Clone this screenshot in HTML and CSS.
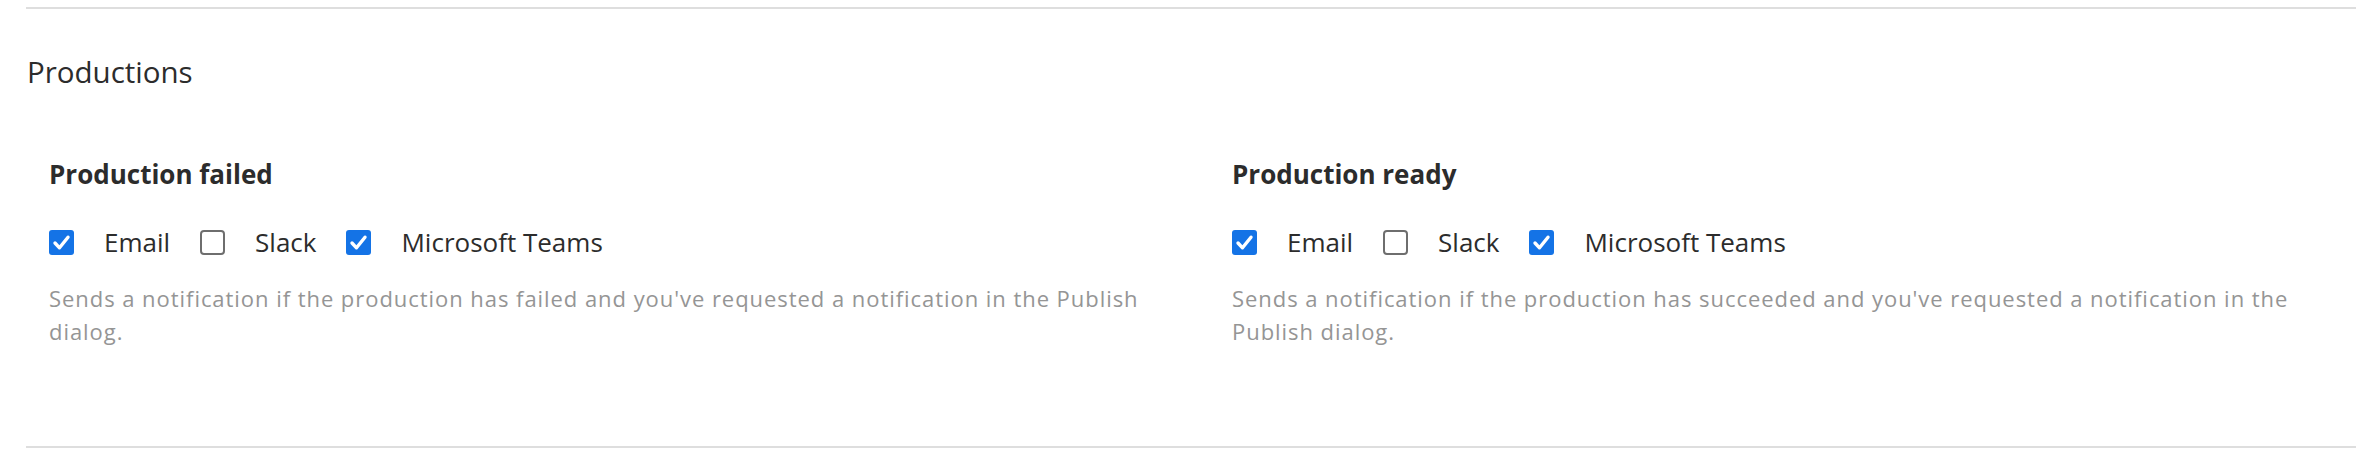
FILE: index.html
```html
<!DOCTYPE html>
<html lang="en">
<head>
<meta charset="utf-8">
<title>Productions</title>
<link rel="stylesheet" href="styles.css">
</head>
<body>
<section class="section">
  <h2 class="section-title">Productions</h2>
  <div class="items">
    <div class="item">
      <h3 class="item-title">Production failed</h3>
      <div class="options">
        <label class="option"><span class="box checked"><svg viewBox="0 0 25 25" width="25" height="25"><path d="M6 13 L10.5 17.8 L19 7.2" fill="none" stroke="#fff" stroke-width="3.4" stroke-linecap="round" stroke-linejoin="round"/></svg></span><span class="option-text">Email</span></label>
        <label class="option"><span class="box"></span><span class="option-text">Slack</span></label>
        <label class="option"><span class="box checked"><svg viewBox="0 0 25 25" width="25" height="25"><path d="M6 13 L10.5 17.8 L19 7.2" fill="none" stroke="#fff" stroke-width="3.4" stroke-linecap="round" stroke-linejoin="round"/></svg></span><span class="option-text">Microsoft Teams</span></label>
      </div>
      <p class="desc">Sends a notification if the production has failed and you've requested a notification in the Publish dialog.</p>
    </div>
    <div class="item">
      <h3 class="item-title">Production ready</h3>
      <div class="options">
        <label class="option"><span class="box checked"><svg viewBox="0 0 25 25" width="25" height="25"><path d="M6 13 L10.5 17.8 L19 7.2" fill="none" stroke="#fff" stroke-width="3.4" stroke-linecap="round" stroke-linejoin="round"/></svg></span><span class="option-text">Email</span></label>
        <label class="option"><span class="box"></span><span class="option-text">Slack</span></label>
        <label class="option"><span class="box checked"><svg viewBox="0 0 25 25" width="25" height="25"><path d="M6 13 L10.5 17.8 L19 7.2" fill="none" stroke="#fff" stroke-width="3.4" stroke-linecap="round" stroke-linejoin="round"/></svg></span><span class="option-text">Microsoft Teams</span></label>
      </div>
      <p class="desc">Sends a notification if the production has succeeded and you've requested a notification in the Publish dialog.</p>
    </div>
  </div>
</section>
</body>
</html>
```

FILE: styles.css
```css
html, body {
  margin: 0;
  padding: 0;
  background: #ffffff;
}

body {
  font-family: "Open Sans", "Noto Sans", sans-serif;
  color: #2c2c2c;
  padding: 7px 14px 0 26px;
}

.section {
  border-top: 2px solid #dedede;
  border-bottom: 2px solid #dedede;
  padding-bottom: 98px;
}

.section-title {
  margin: 43px 0 0 1px;
  font-size: 29.5px;
  line-height: 40px;
  font-weight: 400;
  color: #2c2c2c;
}

.items {
  display: grid;
  grid-template-columns: 1110px 1110px;
  column-gap: 73px;
  padding-left: 23px;
  margin-top: 64px;
}

.item-title {
  margin: 0;
  font-size: 26px;
  line-height: 36px;
  font-weight: 700;
  color: #2c2c2c;
}

.options {
  display: flex;
  align-items: center;
  gap: 30px;
  margin-top: 32px;
}

.option {
  display: flex;
  align-items: center;
  gap: 30px;
}

.box {
  width: 25px;
  height: 25px;
  box-sizing: border-box;
  border: 2px solid #6e6e6e;
  border-radius: 4px;
  background: #fff;
  display: block;
}

.box.checked {
  border: none;
  background: #1473e6;
  border-radius: 3px;
}

.box svg {
  display: block;
}

.option-text {
  font-size: 26px;
  line-height: 36px;
  color: #2c2c2c;
}

.desc {
  margin: 22px 0 0 0;
  font-size: 22px;
  line-height: 33px;
  letter-spacing: 0.95px;
  color: #959595;
}
```
